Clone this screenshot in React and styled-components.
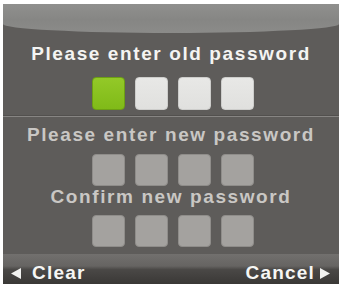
import React from 'react';
import styled, { createGlobalStyle } from 'styled-components';

const GlobalStyle = createGlobalStyle`
  html, body {
    margin: 0;
    padding: 0;
    background: #ffffff;
  }
`;

const Frame = styled.div`
  width: 342px;
  height: 284px;
  box-sizing: border-box;
  padding: 4px 3px 0 3px;
  background: #ffffff;
`;

const Screen = styled.div`
  height: 100%;
  display: flex;
  flex-direction: column;
  align-items: center;
  background: #5e5c5a;
  font-family: 'Liberation Sans', Arial, sans-serif;
  font-weight: 700;
`;

const Header = styled.div`
  align-self: stretch;
  height: 29px;
  background: linear-gradient(to bottom, #90908e 0%, #868684 55%, #8b8b89 100%);
  border-radius: 0 0 50% 50% / 0 0 9px 9px;
`;

const Title = styled.div`
  font-size: 19px;
  line-height: 19px;
  letter-spacing: 1.6px;
  color: ${(p) => (p.$dim ? '#c9c7c4' : '#f4f4f2')};
  margin-top: ${(p) => p.$top}px;
  white-space: nowrap;
`;

const Boxes = styled.div`
  display: flex;
  gap: 10px;
  margin-top: ${(p) => p.$top}px;
  padding-left: 4px;
`;

const Box = styled.div`
  width: 33px;
  height: ${(p) => p.$h}px;
  box-sizing: border-box;
  border-radius: 4px;
  ${(p) =>
    p.$kind === 'active'
      ? `background: linear-gradient(to bottom, #93c928, #80ba18);
         border: 1px solid #6d9f14;`
      : p.$kind === 'light'
      ? `background: linear-gradient(to bottom, #e8e8e6, #e0e0de);
         border: 1px solid #cdcdcb;`
      : `background: #a4a29f;
         border: 1px solid #8f8d8a;`}
`;

const Divider = styled.div`
  align-self: stretch;
  height: 1px;
  margin-top: 6px;
  background: #878583;
  box-shadow: 0 -1px 0 #52504e;
`;

const Footer = styled.div`
  align-self: stretch;
  margin-top: auto;
  height: 30px;
  box-sizing: border-box;
  padding: 7px 9px 0 8px;
  display: flex;
  justify-content: space-between;
  background: linear-gradient(
    to bottom,
    #72706e 0%,
    #666462 40%,
    #4a4846 52%,
    #3a3836 100%
  );
`;

const SoftKey = styled.div`
  display: flex;
  align-items: center;
  gap: ${(p) => p.$gap}px;
  font-size: 19px;
  line-height: 19px;
  letter-spacing: 1.2px;
  color: #f6f6f4;
`;

const Arrow = ({ dir }) => (
  <svg width="10" height="11" viewBox="0 0 10 11" style={{ marginTop: 1 }}>
    {dir === 'left' ? (
      <polygon points="10,0 10,11 0,5.5" fill="#f2f2f0" />
    ) : (
      <polygon points="0,0 0,11 10,5.5" fill="#f2f2f0" />
    )}
  </svg>
);

const Row = ({ top, kinds, h }) => (
  <Boxes $top={top}>
    {kinds.map((k, i) => (
      <Box key={i} $kind={k} $h={h} />
    ))}
  </Boxes>
);

export default function App() {
  return (
    <>
      <GlobalStyle />
      <Frame>
        <Screen>
          <Header />
          <Title $top={11}>Please enter old password</Title>
          <Row top={14} h={33} kinds={['active', 'light', 'light', 'light']} />
          <Divider />
          <Title $top={8} $dim>Please enter new password</Title>
          <Row top={10} h={32} kinds={['gray', 'gray', 'gray', 'gray']} />
          <Title $top={1} $dim>Confirm new password</Title>
          <Row top={9} h={32} kinds={['gray', 'gray', 'gray', 'gray']} />
          <Footer>
            <SoftKey $gap={11}>
              <Arrow dir="left" />
              <span>Clear</span>
            </SoftKey>
            <SoftKey $gap={5}>
              <span>Cancel</span>
              <Arrow dir="right" />
            </SoftKey>
          </Footer>
        </Screen>
      </Frame>
    </>
  );
}
